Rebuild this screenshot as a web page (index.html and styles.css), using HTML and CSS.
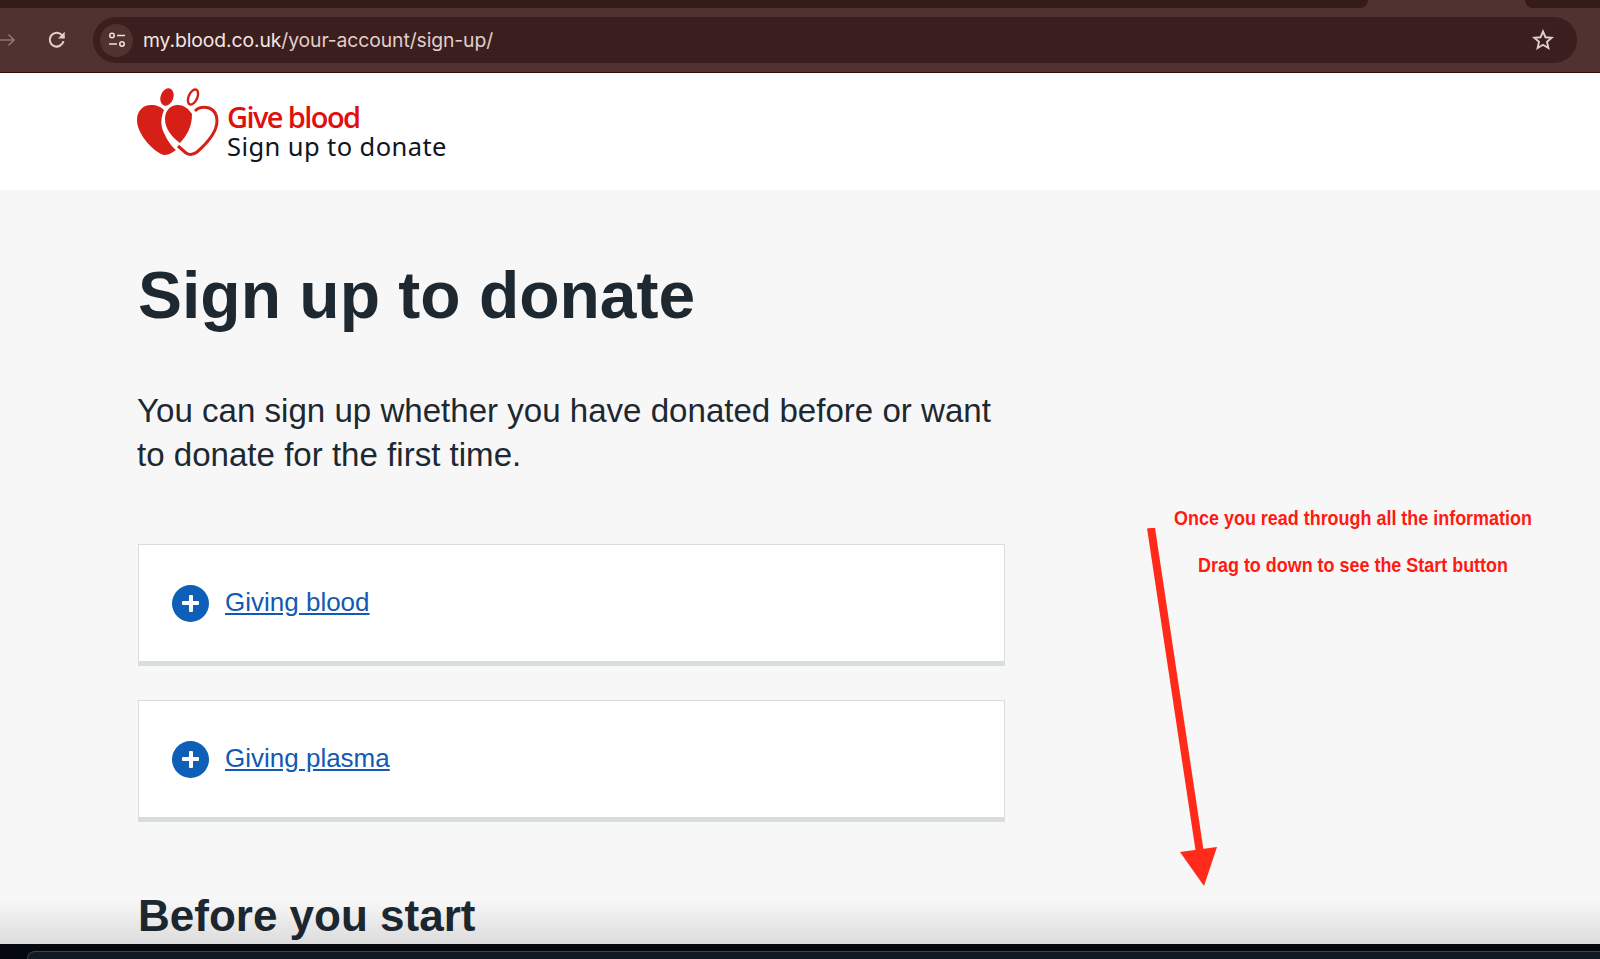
FILE: index.html
```html
<!DOCTYPE html>
<html lang="en">
<head>
<meta charset="utf-8">
<title>Sign up to donate</title>
<link rel="stylesheet" href="styles.css">
</head>
<body>
<div class="browser">
  <div class="tabstrip">
    <div class="strip strip-left"></div>
    <div class="strip strip-right"></div>
  </div>
  <div class="toolbar">
    <svg class="nav-icon forward" viewBox="0 0 16 16" width="16" height="16"><path d="M0 8h14M8.500 2.500 14 8l-5.500 5.500" fill="none" stroke="currentColor" stroke-width="1.700"/></svg>
    <svg class="nav-icon reload" viewBox="0 0 20 20" width="22" height="22"><path d="M15.900 11a6.300 6.300 0 1 1-1.500-5.600L16.500 8" fill="none" stroke="currentColor" stroke-width="1.900"/><path d="M17 2.500V8.600h-6.100z" fill="currentColor"/></svg>
    <div class="address">
      <span class="tune">
        <svg viewBox="0 0 18 16" width="18" height="16"><circle cx="4" cy="3.500" r="2.200" fill="none" stroke="currentColor" stroke-width="1.600"/><path d="M9 3.500h8M1 12h8" stroke="currentColor" stroke-width="1.600"/><circle cx="14" cy="12" r="2.200" fill="none" stroke="currentColor" stroke-width="1.600"/></svg>
      </span>
      <span class="url">my.blood.co.uk<span class="url-path">/your-account/sign-up/</span></span>
      <svg class="star" viewBox="0 0 22 22" width="22" height="22"><path d="m11 2.500 2.500 5.800 6.200.5-4.700 4.100 1.400 6.100-5.400-3.200-5.400 3.200 1.400-6.100-4.700-4.100 6.200-.5z" fill="none" stroke="currentColor" stroke-width="1.900"/></svg>
    </div>
  </div>
</div>

<header class="site-header">
  <svg class="logo" viewBox="0 0 84 72" width="84" height="72">
    <ellipse cx="30" cy="10" rx="6.300" ry="9" transform="rotate(20 30 10)" fill="#d61f16"/>
    <ellipse cx="56" cy="10" rx="4.300" ry="8" transform="rotate(24 56 10)" fill="none" stroke="#d61f16" stroke-width="2.400"/>
    <path d="M0 33C0 24 6 18 14 18c6 0 10 2 13 5-3 7-4 15 0 23 3 7 8 14 12 17-4 3-8 5-12 5C18 66 0 48 0 33z" fill="#d61f16"/>
    <path d="M43 56C35 50 28 42 28 32c0-8 5-14 13-14 5 0 10 3 14 9 0 13-5 21-12 29z" fill="#d61f16"/>
    <path d="M58 24c4-4 10-4 14-3 5 2 8 7 8 13 0 12-12 24-20 31-4 3-8 3-11 1l-8-7" fill="none" stroke="#d61f16" stroke-width="3"/>
  </svg>
  <div class="logo-text">
    <span class="logo-title">Give blood</span>
    <span class="logo-sub">Sign up to donate</span>
  </div>
</header>

<main class="content">
  <h1 class="title">Sign up to donate</h1>
  <p class="lead">You can sign up whether you have donated before or want to donate for the first time.</p>
  <section class="card">
    <span class="plus"></span>
    <a class="card-link" href="#">Giving blood</a>
  </section>
  <section class="card">
    <span class="plus"></span>
    <a class="card-link" href="#">Giving plasma</a>
  </section>
  <h2 class="subtitle">Before you start</h2>
</main>

<div class="note">
  <p>Once you read through all the information</p>
  <p>Drag to down to see the Start button</p>
</div>
<svg class="arrow" viewBox="0 0 80 370" width="80" height="370">
  <path d="M5 0 53.500 322" stroke="#ff2a1a" stroke-width="8" fill="none"/>
  <path d="M34 324 71 319 58 358z" fill="#ff2a1a"/>
</svg>

<div class="fade"></div>
<div class="dock"><div class="dock-window"></div></div>
</body>
</html>
```
FILE: styles.css
```css
* { box-sizing: border-box; }
html, body { margin: 0; height: 959px; overflow: hidden; }
body {
  position: relative;
  display: flex;
  flex-direction: column;
  background: #f7f7f7;
  color: #1d2831;
  font-family: "Liberation Sans", Arial, sans-serif;
}
.browser { flex: none; background: #503331; border-bottom: 1px solid #3d0a0a; height: 73px; }
.tabstrip { height: 8px; position: relative; }
.strip { position: absolute; top: 0; height: 8px; background: #351c1a; }
.strip-left { left: 0; width: 1368px; border-bottom-right-radius: 8px; }
.strip-right { left: 1525px; right: 0; border-bottom-left-radius: 8px; }
.toolbar { display: flex; align-items: center; height: 64px; }
.nav-icon { flex: none; }
.forward { color: #8d7472; margin-left: 0; }
.reload { color: #e6cfcb; margin-left: 30px; }
.address {
  display: flex; align-items: center;
  margin-left: 25px; width: 1484px; height: 46px;
  background: #3b1e1e; border-radius: 23px;
  padding: 0 23px 0 7px; color: #efdfdc;
}
.tune {
  display: flex; align-items: center; justify-content: center;
  width: 33px; height: 33px; border-radius: 50%;
  background: #503331; color: #efdfdc;
}
.url { margin-left: 10px; font: 19.350px "Inter", "Liberation Sans", sans-serif; color: #f3e5e2; letter-spacing: -.1px; }
.url-path { color: #e2cfcb; }
.star { margin-left: auto; color: #e0d0cd; }

.site-header {
  flex: none; height: 117px; background: #fff;
  display: flex; align-items: flex-start; padding: 14px 0 0 137px;
}
.logo { flex: none; }
.logo-text { display: flex; flex-direction: column; margin: 14px 0 0 6px; }
.logo-title { font: 600 29px/31px "Open Sans", sans-serif; color: #e0100f; letter-spacing: -1.600px; }
.logo-sub { font: 25.500px/28px "Noto Sans", sans-serif; color: #0f1520; letter-spacing: .42px; }

.content { flex: 1; padding: 0 0 0 138px; }
.title { margin: 67px 0 0; font-size: 66px; line-height: 76px; font-weight: 700; }
.lead { margin: 56px 0 0 -1px; width: 880px; font-size: 33.100px; line-height: 44px; color: #1d2831; }
.card {
  display: flex; align-items: center;
  width: 867px; height: 122px; margin-top: 34px; padding: 0 0 0 33px;
  background: #fff; border: 1px solid #d8dde0; border-bottom: 5px solid #d8dde0;
}
.lead + .card { margin-top: 67px; }
.plus {
  position: relative; flex: none;
  width: 37px; height: 37px; border-radius: 50%; background: #0d5fb8;
}
.plus::before, .plus::after { content: ""; position: absolute; background: #fff; border-radius: 1px; }
.plus::before { left: 10px; right: 10px; top: 16.500px; height: 4px; }
.plus::after { top: 10px; bottom: 10px; left: 16.500px; width: 4px; }
.card-link { margin: 0 0 2px 16px; font-size: 26px; color: #1259b4; }
.subtitle { margin: 69px 0 0; font-size: 44px; line-height: 50px; font-weight: 700; }

.note {
  position: absolute; left: 1133px; top: 506px; width: 440px;
  text-align: center; color: #ff1a12; font-weight: 700;
  font-size: 20.500px; line-height: 24px;
}
.note p { margin: 0 0 22.500px; transform: scaleX(.875); white-space: nowrap; }
.arrow { position: absolute; left: 1146px; top: 528px; }

.fade {
  position: absolute; left: 0; right: 0; top: 900px; height: 44px;
  background: linear-gradient(to bottom, rgba(0,0,0,0), rgba(0,0,0,.11));
}
.dock { position: absolute; left: 0; right: 0; top: 944px; height: 15px; background: #05090f; }
.dock-window {
  position: absolute; left: 27px; right: 0; top: 7px; bottom: 0;
  background: #111a22; border: 1px solid #3c444b; border-bottom: 0; border-right: 0;
  border-top-left-radius: 14px;
}
```
